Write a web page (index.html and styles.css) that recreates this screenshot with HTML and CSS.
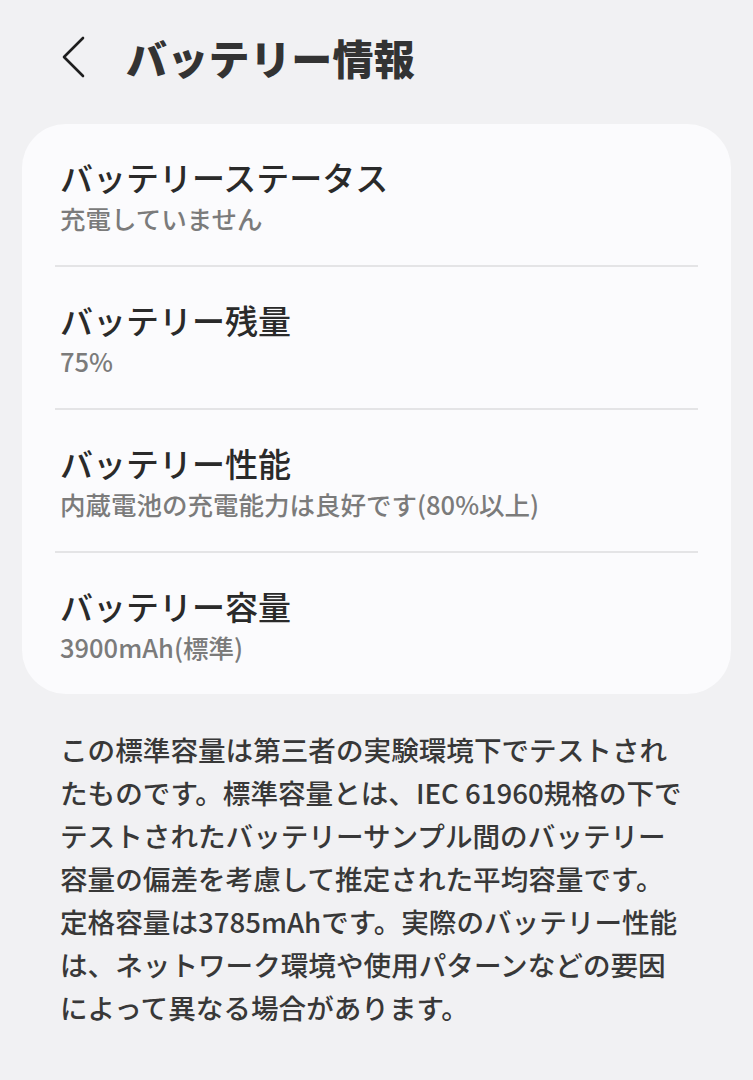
FILE: index.html
```html
<!DOCTYPE html>
<html lang="ja">
<head>
<meta charset="utf-8">
<title>バッテリー情報</title>
<link rel="stylesheet" href="styles.css">
</head>
<body>
<div class="page">
  <header class="header">
    <span class="back">
      <svg width="24" height="42" viewBox="0 0 24 42"><path d="M21 2 L2 21 L21 40" fill="none" stroke="#1e1e1e" stroke-width="2.6" stroke-linecap="round" stroke-linejoin="round"/></svg>
    </span>
    <h1 class="title">バッテリー情報</h1>
  </header>
  <section class="card">
    <div class="item">
      <div class="item-title">バッテリーステータス</div>
      <div class="item-sub">充電していません</div>
    </div>
    <div class="divider"></div>
    <div class="item">
      <div class="item-title">バッテリー残量</div>
      <div class="item-sub">75%</div>
    </div>
    <div class="divider"></div>
    <div class="item">
      <div class="item-title">バッテリー性能</div>
      <div class="item-sub">内蔵電池の充電能力は良好です(80%以上)</div>
    </div>
    <div class="divider"></div>
    <div class="item">
      <div class="item-title">バッテリー容量</div>
      <div class="item-sub">3900mAh(標準)</div>
    </div>
  </section>
  <p class="note"><span class="line">この標準容量は第三者の実験環境下でテストされ</span><span class="line">たものです。標準容量とは、IEC 61960規格の下で</span><span class="line">テストされたバッテリーサンプル間のバッテリー</span><span class="line">容量の偏差を考慮して推定された平均容量です。</span><span class="line">定格容量は3785mAhです。実際のバッテリー性能</span><span class="line">は、ネットワーク環境や使用パターンなどの要因</span><span class="line">によって異なる場合があります。</span></p>
</div>
</body>
</html>
```

FILE: styles.css
```css
html, body {
  margin: 0;
  padding: 0;
  background: #f1f1f3;
}
body {
  font-family: "Noto Sans CJK JP", "Noto Sans", sans-serif;
  color: #262626;
}
.page {
  width: 753px;
  height: 1080px;
  overflow: hidden;
  display: flex;
  flex-direction: column;
}
.header {
  height: 124px;
  display: flex;
  align-items: flex-start;
  padding: 36px 0 0 62px;
  box-sizing: border-box;
}
.back {
  display: flex;
  width: 24px;
  height: 42px;
}
.title {
  margin: -7px 0 0 40px;
  font-size: 41px;
  line-height: 56px;
  font-weight: 900;
  color: #333333;
  letter-spacing: 0.3px;
}
.card {
  margin: 0 22px;
  background: #fbfbfd;
  border-radius: 44px;
  display: flex;
  flex-direction: column;
  padding: 0 33px;
}
.item {
  display: flex;
  flex-direction: column;
  padding: 33px 5px 30px;
  gap: 4px;
}
.item-title {
  font-size: 33px;
  line-height: 40px;
  font-weight: 500;
  color: #2a2a2a;
}
.item-sub {
  font-size: 25.5px;
  line-height: 34px;
  font-weight: 500;
  color: #7b7b7b;
}
.divider {
  height: 2px;
  background: #e4e4e6;
}
.note {
  margin: 34px 0 0 60px;
  font-size: 27.6px;
  line-height: 43px;
  font-weight: 500;
  color: #383838;
}
.line {
  display: block;
  white-space: nowrap;
}
```
